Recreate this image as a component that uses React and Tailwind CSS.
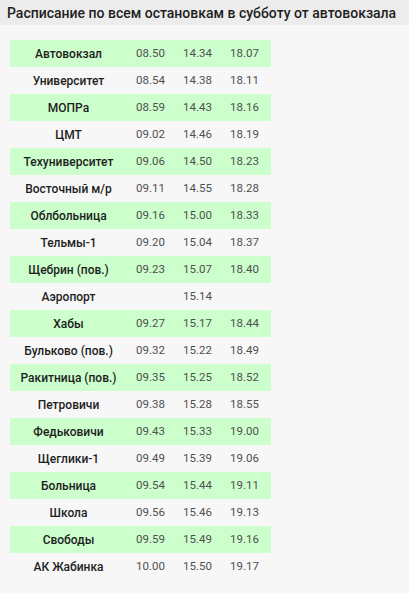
import React from 'react';

const rows = [
  ['Автовокзал', '08.50', '14.34', '18.07'],
  ['Университет', '08.54', '14.38', '18.11'],
  ['МОПРа', '08.59', '14.43', '18.16'],
  ['ЦМТ', '09.02', '14.46', '18.19'],
  ['Техуниверситет', '09.06', '14.50', '18.23'],
  ['Восточный м/р', '09.11', '14.55', '18.28'],
  ['Облбольница', '09.16', '15.00', '18.33'],
  ['Тельмы-1', '09.20', '15.04', '18.37'],
  ['Щебрин (пов.)', '09.23', '15.07', '18.40'],
  ['Аэропорт', '', '15.14', ''],
  ['Хабы', '09.27', '15.17', '18.44'],
  ['Бульково (пов.)', '09.32', '15.22', '18.49'],
  ['Ракитница (пов.)', '09.35', '15.25', '18.52'],
  ['Петровичи', '09.38', '15.28', '18.55'],
  ['Федьковичи', '09.43', '15.33', '19.00'],
  ['Щеглики-1', '09.49', '15.39', '19.06'],
  ['Больница', '09.54', '15.44', '19.11'],
  ['Школа', '09.56', '15.46', '19.13'],
  ['Свободы', '09.59', '15.49', '19.16'],
  ['АК Жабинка', '10.00', '15.50', '19.17'],
];

export default function App() {
  return (
    <div className="w-[409px] h-[593px] bg-[#f7f7f7] font-['Roboto',sans-serif] overflow-hidden">
      <div className="h-[25px] bg-[#ececec] px-[7px] flex items-center">
        <h2 className="text-[14px] font-medium text-[#1e1e1e] leading-none whitespace-nowrap">
          Расписание по всем остановкам в субботу от автовокзала
        </h2>
      </div>
      <table className="ml-[10px] mt-[15px] border-collapse">
        <tbody>
          {rows.map((r, i) => (
            <tr key={r[0]} className={i % 2 === 0 ? 'h-[27px] bg-[#ccffcc]' : 'h-[27px]'}>
              <td className="w-[117px] p-0 text-center text-[12px] font-medium text-[#1e1e1e]">{r[0]}</td>
              <td className="w-[47px] p-0 text-center text-[11.5px] text-[#505050]">{r[1]}</td>
              <td className="w-[47px] p-0 text-center text-[11.5px] text-[#505050]">{r[2]}</td>
              <td className="w-[50px] p-0 pr-[3px] text-center text-[11.5px] text-[#505050]">{r[3]}</td>
            </tr>
          ))}
        </tbody>
      </table>
    </div>
  );
}
